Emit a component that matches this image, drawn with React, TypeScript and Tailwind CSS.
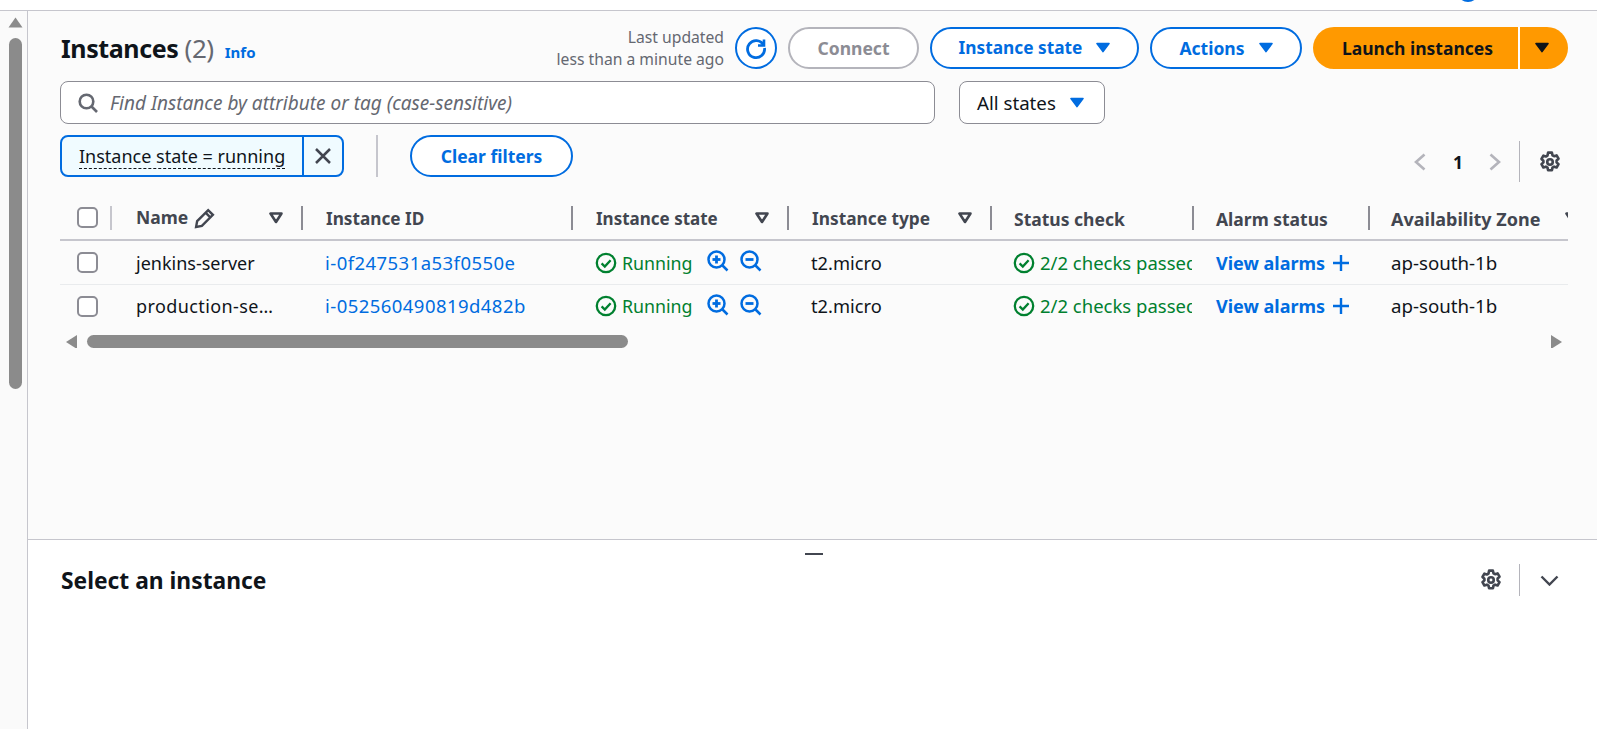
import React from "react";

const Caret = ({ c = "#006ce0", w = 14 }: { c?: string; w?: number }) => (
  <svg width={w} height={w * 0.8} viewBox="0 0 14 11"><path d="M1 1.5h12L7 9.5z" fill={c} stroke={c} strokeWidth="1.6" strokeLinejoin="round" /></svg>
);
const FilterTri = () => (
  <svg width="14" height="12" viewBox="0 0 14 12"><path d="M1.5 1.5h11L7 10z" fill="none" stroke="#424650" strokeWidth="2.6" strokeLinejoin="round" /></svg>
);
const Gear = ({ s = 22 }: { s?: number }) => (
  <svg width={s} height={s} viewBox="0 0 16 16" fill="none" stroke="#424650" strokeWidth="1.9" strokeLinejoin="round">
    <circle cx="8" cy="8" r="2" />
    <path d="M6.6 1.2h2.8l.4 1.9 1.2.7 1.8-.6 1.4 2.4-1.4 1.3v1.4l1.4 1.3-1.4 2.4-1.8-.6-1.2.7-.4 1.9H6.6l-.4-1.9-1.2-.7-1.8.6-1.4-2.4 1.4-1.3V7.1L1.8 5.8l1.4-2.4 1.8.6 1.2-.7z" />
  </svg>
);
const Check = () => (
  <svg width="22" height="22" viewBox="0 0 22 22" fill="none" stroke="#00802f" strokeWidth="2.3"><circle cx="11" cy="11" r="9.2" /><path d="M6.6 11.4l3.2 3.2 5.8-6.4" /></svg>
);
const Zoom = ({ plus }: { plus?: boolean }) => (
  <svg width="22" height="22" viewBox="0 0 22 22" fill="none" stroke="#006ce0" strokeWidth="2.5"><circle cx="9.5" cy="9.5" r="8" /><path d="M15.5 15.5l5 5" /><path d="M5.5 9.5h8" strokeWidth="2.8" />{plus && <path d="M9.5 5.5v8" strokeWidth="2.8" />}</svg>
);
const Box = () => <span className="block w-[21px] h-[21px] rounded-[5px] border-2 border-[#8c8c94] bg-white" />;

const cols = "grid grid-cols-[52px_189px_270px_216px_203px_202px_176px_211px]";

function Head({ label, filter, pr, cls }: { label: string; filter?: boolean; pr?: string; cls: string }) {
  return (
    <div className="flex items-center h-full">
      <span className="w-[2px] h-[24px] bg-[#8c8c94] shrink-0" />
      <span className={`mt-[2px] font-bold text-[#424650] whitespace-nowrap ${cls}`}>{label}</span>
      {filter && <span className={`ml-auto flex ${pr ?? "mr-[18px]"}`}><FilterTri /></span>}
    </div>
  );
}

function Row({ name, id, border, h, nameCls }: { name: string; id: string; border?: boolean; h: string; nameCls?: string }) {
  return (
    <div className={`${cols} ${h} items-center ${border ? "border-b border-[#e9ebed]" : ""} text-[#0f141a] text-[18px]`}>
      <div className="pl-[17px]"><Box /></div>
      <div className={`pl-[24px] whitespace-nowrap ${nameCls ?? ""}`}>{name}</div>
      <div className="pl-[24px]"><span className="text-[#006ce0] text-[18.5px] tracking-[0.45px]">{id}</span></div>
      <div className="pl-[24px] flex items-center">
        <Check />
        <span className="ml-[5px] text-[#00802f] text-[17.8px]">Running</span>
        <span className="ml-[14px] -mt-[3px] flex"><Zoom plus /></span>
        <span className="ml-[11px] -mt-[3px] flex"><Zoom /></span>
      </div>
      <div className="pl-[24px] text-[18.3px]">t2.micro</div>
      <div className="pl-[23px] flex items-center overflow-hidden">
        <span className="shrink-0 flex"><Check /></span>
        <span className="ml-[5px] text-[#00802f] text-[18.5px] whitespace-nowrap">2/2 checks passed</span>
      </div>
      <div className="pl-[24px] flex items-center font-bold text-[#006ce0] whitespace-nowrap">
        View alarms
        <svg className="ml-[7px]" width="18" height="18" viewBox="0 0 18 18" stroke="#006ce0" strokeWidth="2.4"><path d="M1 9h16M9 1v16" /></svg>
      </div>
      <div className="pl-[23px] text-[18.7px]">ap-south-1b</div>
    </div>
  );
}

export default function App() {
  return (
    <div className="h-[729px] w-[1597px] overflow-hidden bg-white flex flex-col text-[17.5px] leading-[22px] font-['Noto_Sans',sans-serif]">
      <header className="relative h-[11px] shrink-0 bg-white border-b border-[#c6c6cd]">
        <span className="absolute left-[1457px] -top-[20px] w-[22px] h-[22px] rounded-full bg-[#006ce0]" />
      </header>
      <div className="flex flex-1 min-h-0">
        <aside className="w-[28px] shrink-0 bg-[#fafafa] border-r border-[#c6c6cd] pl-[9px] pt-[6px] flex flex-col">
          <svg className="-ml-[1px]" width="15" height="11" viewBox="0 0 15 11"><path d="M7.5 .5l7 10H.5z" fill="#8b8b8b" /></svg>
          <span className="block mt-[10px] w-[13px] h-[351px] rounded-full bg-[#8b8b8b]" />
        </aside>
        <main className="flex-1 min-w-0 flex flex-col">
          <section className="h-[529px] shrink-0 bg-[#fbfbfb] border-b border-[#c6c6cd] pl-[32px] pr-[29px] pt-[16px]">
            <div className="flex items-center h-[42px]">
              <h1 className="ml-[1px] text-[25px] leading-[30px] font-bold tracking-[-0.4px] text-[#0f141a]">Instances <span className="font-normal text-[26px] text-[#656871]">(2)</span></h1>
              <span className="ml-[11px] mt-[8px] text-[15px] font-bold text-[#006ce0]">Info</span>
              <div className="ml-auto flex items-center">
                <div className="text-right text-[15.7px] text-[#656871] mr-[11px]"><div>Last updated</div><div>less than a minute ago</div></div>
                <button className="w-[42px] h-[42px] rounded-full border-2 border-[#006ce0] bg-white flex items-center justify-center">
                  <svg width="24" height="24" viewBox="0 0 24 24" fill="none" stroke="#006ce0" strokeWidth="2.8"><path d="M19.5 9A8.5 8.5 0 1 0 20.5 12" /><path d="M20 3.5V9.5H14" strokeWidth="2.6" /></svg>
                </button>
                <button className="ml-[11px] w-[131px] h-[42px] rounded-full border-2 border-[#b4b4bb] bg-white font-bold text-[#8c8c94]">Connect</button>
                <button className="ml-[11px] w-[209px] h-[42px] rounded-full border-2 border-[#006ce0] bg-white font-bold text-[17.3px] text-[#006ce0] flex items-center justify-center gap-[14px]">Instance state <Caret /></button>
                <button className="ml-[11px] w-[152px] h-[42px] rounded-full border-2 border-[#006ce0] bg-white font-bold text-[#006ce0] flex items-center justify-center gap-[14px]">Actions <Caret /></button>
                <div className="ml-[11px] w-[255px] h-[42px] flex">
                  <button className="w-[205px] pl-[4px] rounded-l-full bg-[#ff9900] font-bold text-[#0f141a]">Launch instances</button>
                  <span className="w-[2px] bg-white" />
                  <button className="flex-1 rounded-r-full bg-[#ff9900] flex items-center justify-center pr-[4px]"><Caret c="#0f141a" /></button>
                </div>
              </div>
            </div>
            <div className="flex items-center mt-[12px] h-[43px]">
              <div className="w-[875px] h-full rounded-[8px] border border-[#8c8c94] bg-white flex items-center pl-[17px]">
                <svg width="20" height="20" viewBox="0 0 20 20" fill="none" stroke="#656871" strokeWidth="2.6"><circle cx="8.5" cy="8.5" r="6.8" /><path d="M13.5 13.5l5.5 5.5" /></svg>
                <span className="ml-[12px] italic text-[19px] text-[#656871] whitespace-nowrap">Find Instance by attribute or tag (case-sensitive)</span>
              </div>
              <div className="ml-[24px] w-[146px] h-full rounded-[8px] border border-[#8c8c94] bg-white flex items-center pl-[17px] gap-[14px] text-[18.7px] text-[#0f141a]">All states <Caret /></div>
            </div>
            <div className="flex mt-[11px] h-[42px]">
              <div className="w-[284px] h-full rounded-[8px] border-2 border-[#006ce0] bg-[#f0fbff] flex items-center">
                <div className="w-[240px] pl-[17px] text-[18px] text-[#0f141a] whitespace-nowrap"><span className="border-b border-dashed border-[#0f141a]">Instance state = running</span></div>
                <span className="w-[2px] h-full bg-[#006ce0]" />
                <div className="flex-1 flex justify-center"><svg width="18" height="18" viewBox="0 0 18 18" stroke="#424650" strokeWidth="2.5"><path d="M2 2l14 14M16 2L2 16" /></svg></div>
              </div>
              <span className="ml-[32px] w-[2px] h-full bg-[#c6c6cd]" />
              <button className="ml-[32px] w-[163px] h-full rounded-full border-2 border-[#006ce0] bg-white font-bold text-[#006ce0]">Clear filters</button>
              <div className="ml-auto mt-[6px] h-[41px] flex items-center">
                <svg width="12" height="18" viewBox="0 0 12 18" fill="none" stroke="#b4b4bb" strokeWidth="2.6"><path d="M10.5 1.5L2 9l8.5 7.5" /></svg>
                <span className="ml-[25px] mr-[24px] w-[14px] text-center font-bold text-[#0f141a]">1</span>
                <svg width="12" height="18" viewBox="0 0 12 18" fill="none" stroke="#b4b4bb" strokeWidth="2.6"><path d="M1.5 1.5L10 9l-8.5 7.5" /></svg>
                <span className="ml-[18px] w-[1px] h-full bg-[#b4b4bb]" />
                <span className="ml-[19px] mr-[7px] flex"><Gear /></span>
              </div>
            </div>
            <div className="mt-[19px] w-[1508px] overflow-hidden">
              <div className={`${cols} h-[45px] border-b-2 border-[#c6c6cd] items-center`}>
                <div className="pl-[17px] flex items-center justify-between h-full"><Box /><span className="w-[2px] h-[24px] bg-[#c6c6cd]" /></div>
                <div className="flex items-center h-full">
                  <span className="ml-[24px] -mt-[2px] font-bold text-[#424650]">Name</span>
                  <svg className="ml-[6px] mt-[1px]" width="21" height="21" viewBox="0 0 20 20" fill="none" stroke="#424650" strokeWidth="2.3"><path d="M2 18l1-5.5L13.5 2 18 6.5 7.5 17z" /><path d="M11 4.5l4.5 4.5" /></svg>
                  <span className="ml-auto mr-[18px] flex"><FilterTri /></span>
                </div>
                <Head label="Instance ID" cls="ml-[23px] text-[17.2px]" />
                <Head label="Instance state" filter cls="ml-[23px] text-[17px]" />
                <Head label="Instance type" filter cls="ml-[23px] text-[17.3px]" />
                <Head label="Status check" cls="ml-[22px] text-[17.5px]" />
                <Head label="Alarm status" cls="ml-[22px] text-[17.5px]" />
                <Head label="Availability Zone" filter pr="mr-[0px]" cls="ml-[21px] text-[18px]" />
              </div>
              <Row name="jenkins-server" id="i-0f247531a53f0550e" border h="h-[44px]" />
              <Row name="production-se…" id="i-052560490819d482b" h="h-[42px]" nameCls="tracking-[0.4px]" />
              <div className="flex items-center h-[13px] mt-[8px]">
                <svg className="ml-[6px]" width="11" height="14" viewBox="0 0 11 14"><path d="M11 0v14L0 7z" fill="#8b8b8b" /></svg>
                <span className="ml-[10px] w-[541px] h-[13px] rounded-full bg-[#8b8b8b]" />
                <svg className="ml-auto mr-[6px]" width="11" height="14" viewBox="0 0 11 14"><path d="M0 0v14l11-7z" fill="#8b8b8b" /></svg>
              </div>
            </div>
          </section>
          <section className="relative flex-1 bg-white pl-[32px] pr-[29px]">
            <span className="absolute left-[777px] top-[13px] w-[18px] h-[2px] bg-[#424650]" />
            <div className="flex items-center h-[32px] mt-[24px]">
              <h2 className="ml-[1px] mt-[1px] text-[22.8px] leading-[26px] font-bold text-[#0f141a]">Select an instance</h2>
              <div className="ml-auto flex items-center h-full">
                <Gear />
                <span className="ml-[17px] w-[1px] h-full bg-[#b4b4bb]" />
                <svg className="ml-[20px] mr-[9px]" width="19" height="11" viewBox="0 0 19 11" fill="none" stroke="#424650" strokeWidth="2.4"><path d="M1.5 1.5l8 8 8-8" /></svg>
              </div>
            </div>
          </section>
        </main>
      </div>
    </div>
  );
}
